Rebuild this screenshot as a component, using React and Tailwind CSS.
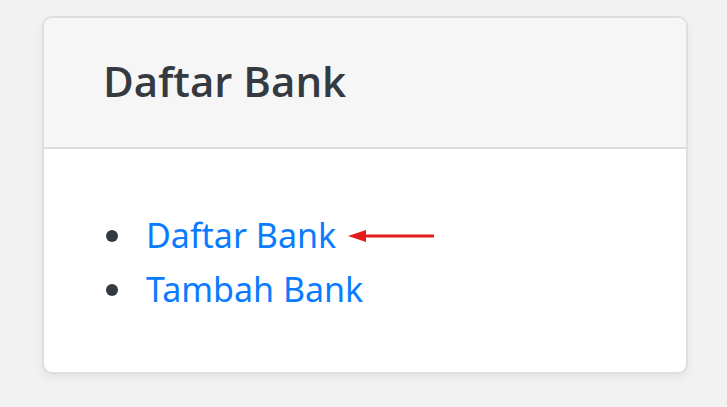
export default function App() {
  return (
    <div className="min-h-[407px] w-[727px] bg-[#f2f2f2] pt-[16px] pl-[42px]" style={{ fontFamily: '"Noto Sans", "Open Sans", sans-serif' }}>
      <div className="w-[646px] h-[358px] rounded-[10px] border-2 border-[#dedede] bg-white overflow-hidden shadow-[0_4px_10px_rgba(0,0,0,0.06)]">
        <div className="h-[131px] bg-[#f6f6f6] border-b-2 border-[#dcdcdc] flex items-center pl-[59px]">
          <h2 className="text-[42px] font-semibold text-[#343a40] leading-none -mt-[3px]" style={{ fontFamily: '"Open Sans", sans-serif' }}>Daftar Bank</h2>
        </div>
        <ul className="pt-[59px] pl-[93px] text-[34px] leading-[54px] list-disc marker:text-[#343a40]">
          <li className="pl-[9px]">
            <span className="inline-flex items-center gap-[12px]">
              <a href="#" className="text-[#0a7bff]">Daftar Bank</a>
              <svg width="86" height="14" viewBox="0 0 86 14" className="mt-[2px]">
                <line x1="10" y1="7" x2="86" y2="7" stroke="#e31b1b" strokeWidth="3" />
                <polygon points="0,7 18,1 18,13" fill="#e31b1b" />
              </svg>
            </span>
          </li>
          <li className="pl-[9px]">
            <a href="#" className="text-[#0a7bff]">Tambah Bank</a>
          </li>
        </ul>
      </div>
    </div>
  );
}
